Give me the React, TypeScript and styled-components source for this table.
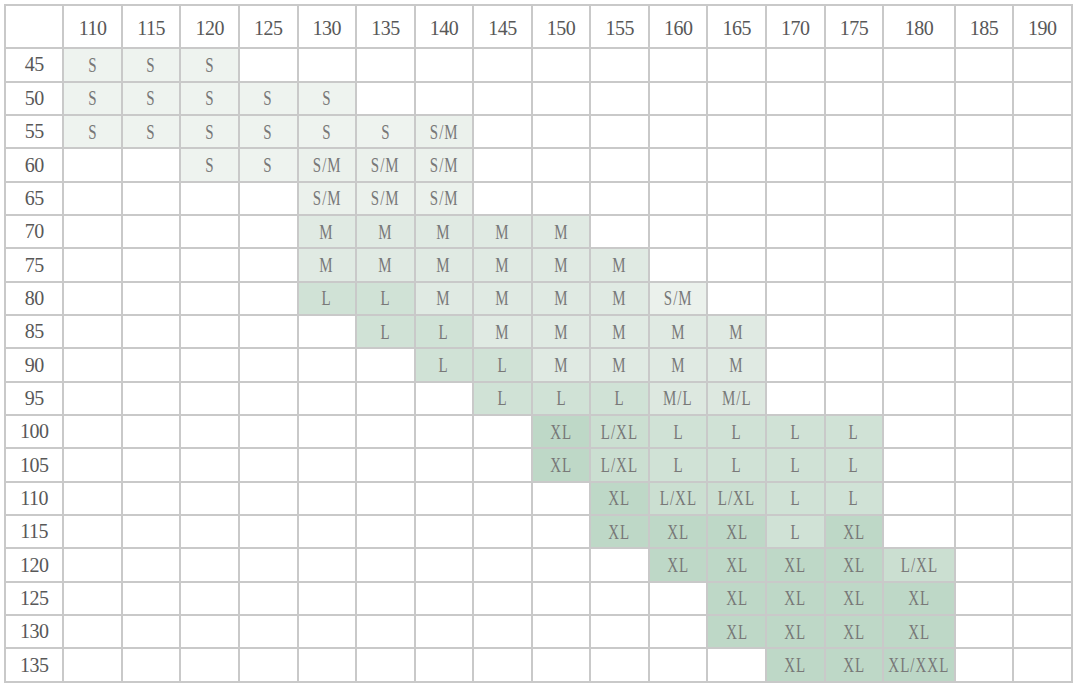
import React from 'react'
import styled, { createGlobalStyle } from 'styled-components'

type Size = 'S' | 'S/M' | 'M' | 'M/L' | 'L' | 'L/XL' | 'XL' | 'XL/XXL'

const heights = ['110', '115', '120', '125', '130', '135', '140', '145', '150', '155', '160', '165', '170', '175', '180', '185', '190']

// weight, first filled column (index into heights), sizes from there on
const chart: [string, number, Size[]][] = [
  ['45', 0, ['S', 'S', 'S']],
  ['50', 0, ['S', 'S', 'S', 'S', 'S']],
  ['55', 0, ['S', 'S', 'S', 'S', 'S', 'S', 'S/M']],
  ['60', 2, ['S', 'S', 'S/M', 'S/M', 'S/M']],
  ['65', 4, ['S/M', 'S/M', 'S/M']],
  ['70', 4, ['M', 'M', 'M', 'M', 'M']],
  ['75', 4, ['M', 'M', 'M', 'M', 'M', 'M']],
  ['80', 4, ['L', 'L', 'M', 'M', 'M', 'M', 'S/M']],
  ['85', 5, ['L', 'L', 'M', 'M', 'M', 'M', 'M']],
  ['90', 6, ['L', 'L', 'M', 'M', 'M', 'M']],
  ['95', 7, ['L', 'L', 'L', 'M/L', 'M/L']],
  ['100', 8, ['XL', 'L/XL', 'L', 'L', 'L', 'L']],
  ['105', 8, ['XL', 'L/XL', 'L', 'L', 'L', 'L']],
  ['110', 9, ['XL', 'L/XL', 'L/XL', 'L', 'L']],
  ['115', 9, ['XL', 'XL', 'XL', 'L', 'XL']],
  ['120', 10, ['XL', 'XL', 'XL', 'XL', 'L/XL']],
  ['125', 11, ['XL', 'XL', 'XL', 'XL']],
  ['130', 11, ['XL', 'XL', 'XL', 'XL']],
  ['135', 12, ['XL', 'XL', 'XL/XXL']],
]

const shades: Record<Size, string> = {
  S: '#eef3ef',
  'S/M': '#ebf1ec',
  M: '#e0eae3',
  'M/L': '#dde8e0',
  L: '#d0e2d6',
  'L/XL': '#cbdfd1',
  XL: '#bed8c7',
  'XL/XXL': '#bcd7c6',
}

const GlobalStyle = createGlobalStyle`
  body {
    margin: 0;
    background: #ffffff;
  }
`

const Page = styled.div`
  padding: 4px 0 0 4px;
`

const Grid = styled.div`
  display: grid;
  grid-template-columns: 56.3px repeat(14, 56.57px) 69.7px 56.3px 56.4px;
  grid-template-rows: 41.3px repeat(19, 31.35px);
  gap: 2px;
  padding: 2px;
  width: max-content;
  background: #c9c9c9;
`

const Cell = styled.div<{ $bg?: string }>`
  display: flex;
  align-items: center;
  justify-content: center;
  background: ${({ $bg }) => $bg || '#ffffff'};
  font-family: 'Liberation Serif', 'DejaVu Serif', serif;
  overflow: hidden;
`

const Label = styled.span<{ $header?: boolean }>`
  font-size: 20px;
  color: #585858;
  letter-spacing: -0.5px;
  margin-top: ${({ $header }) => ($header ? '3px' : '0')};
`

const SizeText = styled.span`
  display: inline-block;
  font-size: 22px;
  color: #787878;
  letter-spacing: 1.5px;
  transform: scaleX(0.68);
  white-space: nowrap;
`

export default function App() {
  return (
    <Page>
      <GlobalStyle />
      <Grid>
        <Cell />
        {heights.map((h) => (
          <Cell key={h}>
            <Label $header>{h}</Label>
          </Cell>
        ))}
        {chart.map(([weight, start, sizes]) => (
          <React.Fragment key={weight}>
            <Cell>
              <Label>{weight}</Label>
            </Cell>
            {heights.map((h, i) => {
              const size = i >= start ? sizes[i - start] : undefined
              return (
                <Cell key={h} $bg={size ? shades[size] : undefined}>
                  {size && <SizeText>{size}</SizeText>}
                </Cell>
              )
            })}
          </React.Fragment>
        ))}
      </Grid>
    </Page>
  )
}
